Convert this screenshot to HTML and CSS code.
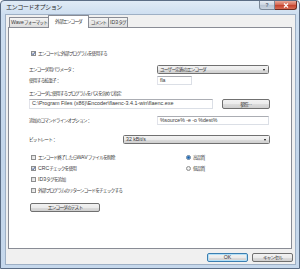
FILE: index.html
```html
<!DOCTYPE html>
<html lang="ja">
<head>
<meta charset="utf-8">
<title>エンコードオプション</title>
<link rel="stylesheet" href="styles.css">
</head>
<body>
<div class="window">
  <div class="titlebar"><span class="title">エンコードオプション</span></div>
  <div class="caption">
    <span class="cap-help">?</span>
    <span class="cap-close"><svg width="8" height="5" viewBox="0 0 8 5"><path d="M2 0.5 L6 4.5 M6 0.5 L2 4.5" stroke="#fff" stroke-width="1.2"/></svg></span>
  </div>
  <div class="client">
    <div class="tabs">
      <div class="tab t1"><span class="en">Wave</span>フォーマット</div>
      <div class="tab t2 active">外部エンコーダ</div>
      <div class="tab t3">コメント</div>
      <div class="tab t4"><span class="en">ID3</span>タグ</div>
    </div>
    <div class="panel">
      <div class="check-row row1"><span class="cb"><svg width="5" height="5" viewBox="0 0 10 10"><path d="M2 5 L4.2 7.5 L8.2 2.2" fill="none" stroke="#2b4c8e" stroke-width="1.8"/></svg></span>エンコードに外部プログラムを使用する</div>
      <div class="field row2"><span class="lbl wide">エンコーダ用パラメータ：</span><div class="combo c-enc">ユーザー定義のエンコーダ<i class="arrow"></i></div></div>
      <div class="field row3"><span class="lbl wide">使用する拡張子：</span><div class="input i-ext"><span class="en">fla</span></div></div>
      <div class="field row4"><span class="lbl">エンコーダに使用するプログラムをパスを含めて指定</span></div>
      <div class="field row5"><div class="input i-path"><span class="en path">C:\Program Files (x86)\Encoder\flaenc-3.4.1-win\flaenc.exe</span></div><div class="btn b-browse">参照<span class="en">...</span></div></div>
      <div class="field row6"><span class="lbl wide">追加のコマンドラインオプション：</span><div class="input i-opt"><span class="en">%source% -e -o %dest%</span></div></div>
      <div class="field row7"><span class="lbl narrow">ビットレート：</span><div class="combo c-rate"><span class="en">32 kBit/s</span><i class="arrow"></i></div></div>
      <div class="options">
        <div class="col">
          <div class="check-row opt"><span class="cb"></span>エンコード終了したら<span class="en">WAV</span>ファイルを削除</div>
          <div class="check-row opt"><span class="cb"><svg width="5" height="5" viewBox="0 0 10 10"><path d="M2 5 L4.2 7.5 L8.2 2.2" fill="none" stroke="#2b4c8e" stroke-width="1.8"/></svg></span><span class="en">CRC</span>チェックを使用</div>
          <div class="check-row opt"><span class="cb"></span><span class="en">ID3</span>タグを追加</div>
          <div class="check-row opt"><span class="cb"></span>外部プログラムのリターンコードをチェックする</div>
        </div>
        <div class="col">
          <div class="check-row opt"><span class="rb on"></span>高品質</div>
          <div class="check-row opt"><span class="rb"></span>低品質</div>
        </div>
      </div>
      <div class="btn b-test">エンコーダのテスト</div>
    </div>
    <div class="footer">
      <div class="btn b-ok default"><span class="en">OK</span></div>
      <div class="btn b-cancel">キャンセル</div>
    </div>
  </div>
</div>
</body>
</html>
```
FILE: styles.css
```css
* { box-sizing: border-box; margin: 0; padding: 0; }
html, body { width: 300px; height: 269px; overflow: hidden; background: #fff; }
body {
  font-family: "Noto Sans CJK JP", "Noto Sans", sans-serif;
  font-size: 4.7px;
  letter-spacing: -0.85px;
  line-height: 1;
  color: #3a3a3a;
}
.en { font-family: "Liberation Sans", "Noto Sans CJK JP", sans-serif; font-size: 5.2px; letter-spacing: 0; }

.window {
  position: relative;
  width: 300px;
  height: 269px;
  display: flex;
  flex-direction: column;
  background: linear-gradient(#e0ebf6, #cddef0 14px, #c2d5ea 60%, #c6d8ec);
  border: 1px solid #5b6d85;
  border-radius: 4px 4px 0 0;
  padding: 0 3px 3px 4px;
}
.titlebar { height: 13px; display: flex; align-items: center; padding-left: 1px; }
.title { font-size: 6.2px; letter-spacing: -0.6px; color: #2a2a2a; }

.caption { position: absolute; top: 0; right: 2px; display: flex; height: 9px; }
.cap-help {
  width: 16px; height: 9px;
  display: flex; align-items: center; justify-content: center;
  font-family: "Liberation Sans", sans-serif; font-size: 5px; font-weight: bold; letter-spacing: 0;
  color: #4e5d70;
  background: linear-gradient(#e6ecf3, #cbd5e1 50%, #b7c3d2 51%, #c9d3df);
  border: 1px solid #7b8898; border-top: none;
  border-radius: 0 0 0 3px;
}
.cap-close {
  width: 22px; height: 9px;
  display: flex; align-items: center; justify-content: center;
  background: linear-gradient(#e9a999, #d4644f 50%, #c3402b 51%, #d76c55);
  border: 1px solid #6e2c22; border-top: none; border-left: none;
  border-radius: 0 0 3px 0;
}

.client {
  flex: 1;
  display: flex;
  flex-direction: column;
  background: #f0f0f0;
  border: 1px solid #9eb0c5;
}

.tabs { display: flex; align-items: flex-end; height: 12px; padding-left: 3px; position: relative; z-index: 1; }
.tab {
  height: 10px;
  display: flex; align-items: center; justify-content: center;
  border: 1px solid #898c95; border-bottom: none;
  background: linear-gradient(#f5f5f5, #e8e8e8 50%, #dedede);
  border-radius: 1px 1px 0 0;
}
.tab + .tab { margin-left: -1px; }
.tab.active { height: 13px; margin-bottom: -1px; background: #fff; padding-bottom: 2px; }
.t1 { width: 40px; }
.t2 { width: 41px; }
.t3 { width: 21px; }
.t4 { width: 20px; }

.panel {
  margin-left: 2px;
  width: 284px;
  height: 222px;
  background: #fff;
  border: 1px solid #898c95;
  padding: 21px 21px 0 20px;
  display: flex;
  flex-direction: column;
}

.check-row { display: flex; align-items: center; }
.row1 { height: 8px; padding-left: 2px; }
.cb {
  flex: none;
  width: 5px; height: 5px;
  margin-right: 2px;
  border: 1px solid #8e8f8f;
  background: linear-gradient(135deg, #d9d9d9, #f6f6f6);
  display: flex; align-items: center; justify-content: center;
}
.cb svg { flex: none; }
.rb {
  flex: none;
  width: 5px; height: 5px;
  margin-right: 2px;
  border-radius: 50%;
  border: 1px solid #8e8f8f;
  background: radial-gradient(circle at 40% 40%, #fafafa, #d6d6d6);
}
.rb.on { background: radial-gradient(circle, #1d5aa6 0, #3d86cc 1.2px, #cfe3f4 1.8px); border-color: #5d7b9a; }

.field { display: flex; align-items: center; }
.lbl { flex: none; }
.lbl.wide { width: 128px; }
.lbl.narrow { width: 94px; }
.row2 { height: 9px; margin-top: 8px; }
.row3 { height: 9px; margin-top: 2px; }
.row4 { height: 7px; margin-top: 5px; }
.row5 { height: 10px; margin-top: 2px; justify-content: space-between; }
.row6 { height: 9px; margin-top: 7px; }
.row7 { height: 9px; margin-top: 10px; }

.combo {
  height: 9px;
  display: flex; align-items: center;
  padding-left: 2px;
  border: 1px solid #707070;
  border-radius: 1.5px;
  background: linear-gradient(#f3f3f3, #ebebeb 50%, #dddddd 51%, #cfcfcf);
}
.c-enc { width: 112px; }
.c-rate { width: 147px; }
.arrow {
  margin-left: auto; margin-right: 3px;
  width: 0; height: 0;
  border-left: 1.5px solid transparent;
  border-right: 1.5px solid transparent;
  border-top: 2px solid #111;
}

.input {
  height: 9px;
  display: flex; align-items: center;
  padding-left: 2px;
  background: #fff;
  border: 1px solid #dbdfe6;
  border-top-color: #abadb3;
  border-left-color: #e2e3ea;
}
.i-ext { width: 35px; }
.i-opt { width: 112px; }
.i-path { width: 184px; height: 10px; }
.path { font-size: 5.4px; }

.btn {
  display: flex; align-items: center; justify-content: center;
  border: 1px solid #707070;
  border-radius: 2px;
  background: linear-gradient(#f2f2f2, #ebebeb 50%, #dddddd 51%, #cfcfcf);
  color: #333;
}
.b-browse { width: 48px; height: 10px; }
.options { display: grid; grid-template-columns: 157px 1fr; margin-top: 8px; }
.opt { height: 11px; padding-left: 2px; }
.options .col:last-child .opt { padding-left: 0; }
.b-test { width: 70px; height: 9px; margin-top: 7px; margin-left: 1px; }

.footer { flex: 1; display: flex; justify-content: flex-end; align-items: flex-start; padding: 4px 2px 0 0; gap: 4px; }
.b-ok, .b-cancel { width: 41px; height: 9px; }
.default { border-color: #3c7fb1; box-shadow: inset 0 0 0 1px #b4e0f7; }
```
